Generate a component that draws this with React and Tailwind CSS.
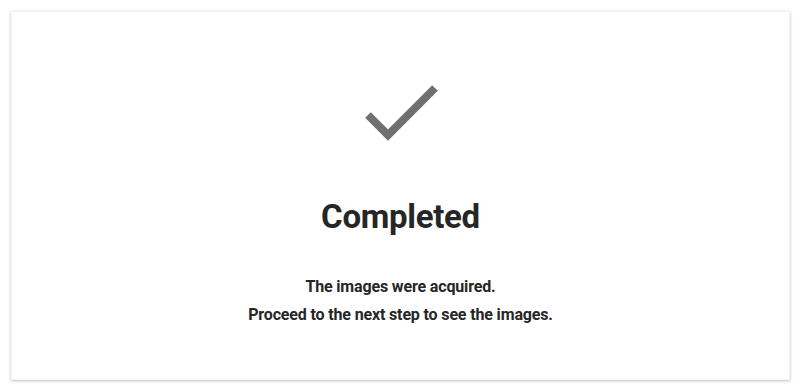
export default function App() {
  return (
    <div className="h-[392px] w-[801px] bg-white pt-[11px] pl-[11px] pr-[11px] pb-[12px]">
      <div
        className="flex h-full flex-col items-center border border-gray-100 bg-white shadow-[0_1px_3px_rgba(0,0,0,0.25)] pt-[72px] text-[#262626]"
        style={{ fontFamily: "Roboto, 'Liberation Sans', sans-serif" }}
      >
        <svg width="74" height="58" viewBox="365 82 74 58" className="ml-[3px]">
          <polyline
            points="368,113 388,133 435,86"
            fill="none"
            stroke="#707070"
            strokeWidth="8"
            strokeLinecap="butt"
            strokeLinejoin="miter"
          />
        </svg>
        <h1 className="mt-[58px] text-[33px] font-bold leading-none tracking-[-0.3px]">Completed</h1>
        <div className="mt-[45px] flex flex-col items-center gap-[10px] text-[16px] font-bold leading-[18px] tracking-[-0.15px]">
          <p>The images were acquired.</p>
          <p>Proceed to the next step to see the images.</p>
        </div>
      </div>
    </div>
  );
}
